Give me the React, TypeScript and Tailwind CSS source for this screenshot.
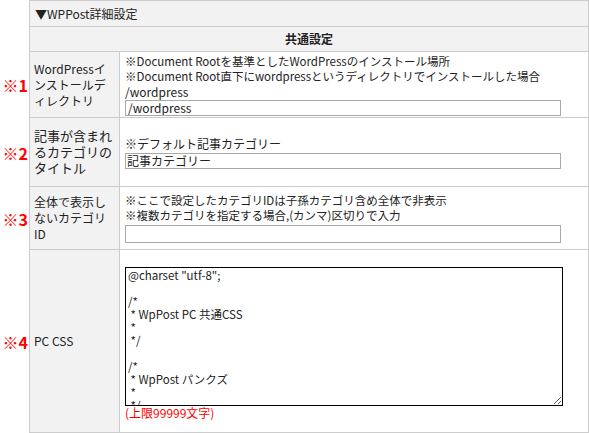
const F = { fontFamily: '"Noto Sans CJK JP", "DejaVu Sans", sans-serif' };

function Row({ mark, label, h, children }: { mark: string; label: React.ReactNode; h: string; children: React.ReactNode }) {
  return (
    <div className={`flex ${h}`}>
      <div className="w-[29px] flex items-center justify-end pr-[1px] text-[#ff0000] font-bold text-[16px] leading-none">{mark}</div>
      <div className="w-[90px] bg-[#f2f2f2] border-l border-b border-[#cccccc] px-[4px] flex items-center text-[12px] leading-[16px]">{label}</div>
      <div className="flex-1 border-l border-r border-b border-[#cccccc] pl-[5px] pr-[6px] flex flex-col justify-center text-[12px] leading-[15px]">{children}</div>
    </div>
  );
}

export default function App() {
  return (
    <div className="w-[589px] h-[433px] bg-white text-[#222] overflow-hidden" style={F}>
      <div className="ml-[29px] h-[27px] border border-[#cccccc] bg-[#f2f2f2] flex items-center px-[5px] text-[12px]">▼WPPost詳細設定</div>
      <div className="ml-[29px] h-[25px] border-x border-b border-[#cccccc] bg-[#f2f2f2] flex items-center justify-center text-[12px] font-bold">共通設定</div>
      <Row mark="※1" label={<span>WordPressインストールディレクトリ</span>} h="h-[66px]">
        <div className="text-[11.5px]">※Document Rootを基準としたWordPressのインストール場所</div>
        <div className="text-[11.5px]">※Document Root直下にwordpressというディレクトリでインストールした場合</div>
        <div>/wordpress</div>
        <input defaultValue="/wordpress" className="mt-[1px] w-[436px] h-[16px] border border-[#aaa] px-[2px] text-[12px] outline-none" style={F} />
      </Row>
      <Row mark="※2" label={<span className="text-[13px]">記事が含まれるカテゴリのタイトル</span>} h="h-[69px]">
        <div>※デフォルト記事カテゴリー</div>
        <input defaultValue="記事カテゴリー" className="mt-[2px] w-[436px] h-[16px] border border-[#aaa] px-[1px] text-[12px] outline-none" style={F} />
      </Row>
      <Row mark="※3" label={<span>全体で表示しないカテゴリID</span>} h="h-[63px]">
        <div className="text-[11.5px]">※ここで設定したカテゴリIDは子孫カテゴリ含め全体で非表示</div>
        <div className="text-[11.5px]">※複数カテゴリを指定する場合,(カンマ)区切りで入力</div>
        <input className="mt-[2px] w-[436px] h-[18px] border border-[#aaa] outline-none" />
      </Row>
      <Row mark="※4" label={<span>PC CSS</span>} h="h-[183px]">
        <textarea
          className="mt-[5px] w-[438px] h-[139px] border border-black px-[2px] py-[1px] text-[11.5px] leading-[13px] resize-y outline-none overflow-y-scroll"
          style={F}
          defaultValue={'@charset "utf-8";\n\n/*\n * WpPost PC 共通CSS\n *\n */\n\n/*\n * WpPost パンクズ\n *\n */\n'}
        />
        <div className="text-[#ff0000] text-[12px] leading-[14px]">(上限99999文字)</div>
      </Row>
    </div>
  );
}
